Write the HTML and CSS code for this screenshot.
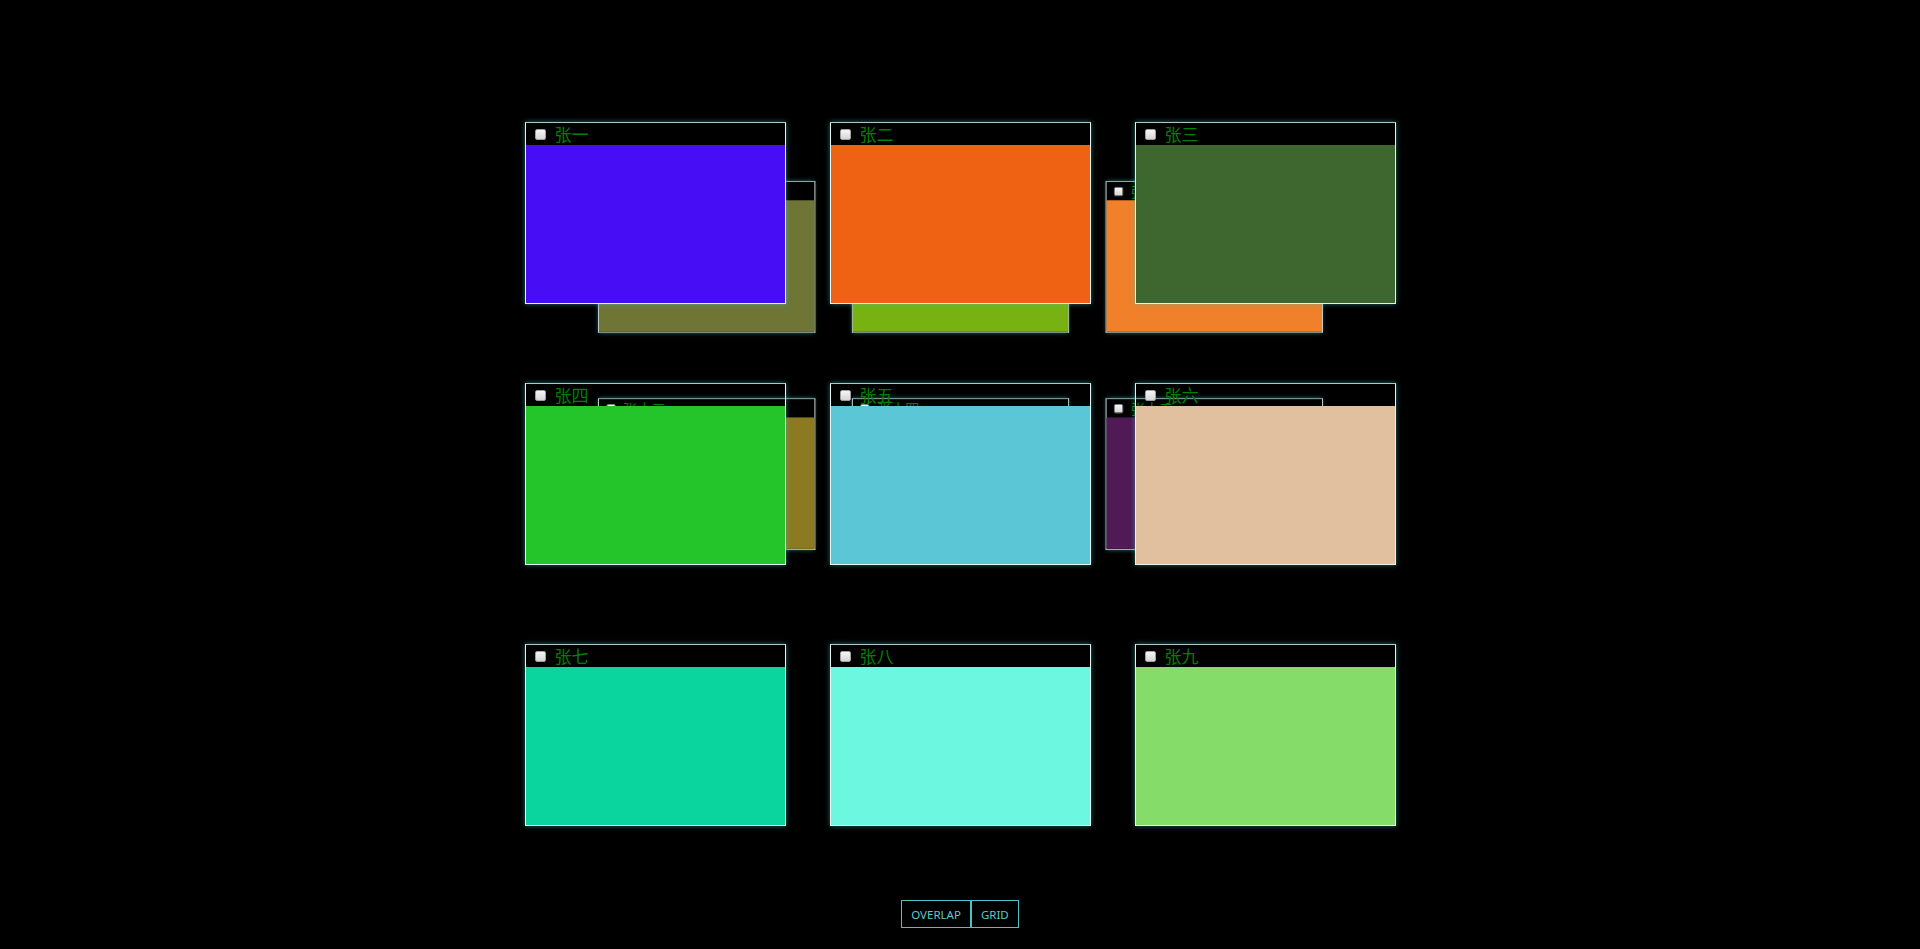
FILE: index.html
```html
<!DOCTYPE html>
<html lang="zh">
<head>
  <meta charset="UTF-8">
  <meta name="viewport" content="width=device-width, initial-scale=1">
  <title>Cards</title>
  <link rel="stylesheet" href="styles.css">
</head>
<body>
  <!-- Kartu-kartu bertumpuk -->
  <div class="stage">
    <div class="layer back">
      <div class="card"><div class="card-head"><input type="checkbox"><span>张十</span></div><div class="card-body c10"></div></div>
      <div class="card"><div class="card-head"><input type="checkbox"><span>张十一</span></div><div class="card-body c11"></div></div>
      <div class="card"><div class="card-head"><input type="checkbox"><span>张十二</span></div><div class="card-body c12"></div></div>
      <div class="card"><div class="card-head"><input type="checkbox"><span>张十三</span></div><div class="card-body c13"></div></div>
      <div class="card"><div class="card-head"><input type="checkbox"><span>张十四</span></div><div class="card-body c14"></div></div>
      <div class="card"><div class="card-head"><input type="checkbox"><span>张十五</span></div><div class="card-body c15"></div></div>
    </div>
    <div class="layer front">
      <div class="card"><div class="card-head"><input type="checkbox"><span>张一</span></div><div class="card-body c1"></div></div>
      <div class="card"><div class="card-head"><input type="checkbox"><span>张二</span></div><div class="card-body c2"></div></div>
      <div class="card"><div class="card-head"><input type="checkbox"><span>张三</span></div><div class="card-body c3"></div></div>
      <div class="card"><div class="card-head"><input type="checkbox"><span>张四</span></div><div class="card-body c4"></div></div>
      <div class="card"><div class="card-head"><input type="checkbox"><span>张五</span></div><div class="card-body c5"></div></div>
      <div class="card"><div class="card-head"><input type="checkbox"><span>张六</span></div><div class="card-body c6"></div></div>
      <div class="card"><div class="card-head"><input type="checkbox"><span>张七</span></div><div class="card-body c7"></div></div>
      <div class="card"><div class="card-head"><input type="checkbox"><span>张八</span></div><div class="card-body c8"></div></div>
      <div class="card"><div class="card-head"><input type="checkbox"><span>张九</span></div><div class="card-body c9"></div></div>
    </div>
  </div>

  <!-- Tombol mode -->
  <div class="modes">
    <button class="mode-btn">OVERLAP</button>
    <button class="mode-btn">GRID</button>
  </div>
</body>
</html>
```

FILE: styles.css
```css
/* Reset dasar */
* {
  margin: 0;
  padding: 0;
  box-sizing: border-box;
}
body {
  background: #000;
  font-family: "Noto Sans", "Noto Sans CJK SC", sans-serif;
  height: 100vh;
  overflow: hidden;
}

/* Panggung kartu */
.stage {
  display: grid;
  justify-content: center;
  padding-top: 122px;
}
.layer {
  grid-area: 1 / 1;
  position: relative;
  display: grid;
  grid-template-columns: repeat(3, 261px);
  grid-template-rows: repeat(3, 182px);
  column-gap: 44px;
  row-gap: 79px;
}
.layer.back {
  z-index: 1;
  transform: scale(0.832);
  transform-origin: center center;
}
.layer.front {
  z-index: 2;
}

/* Kartu (header transparan) */
.card {
  display: flex;
  flex-direction: column;
  border: 1px solid #e4f2f2;
  border-top-color: #a9c9c9;
  box-shadow: 0 0 5px rgba(70, 190, 190, 0.55);
}
.card-head {
  height: 22px;
  display: flex;
  align-items: center;
  gap: 9px;
  padding-left: 9px;
  color: #008000;
  font-family: "Noto Sans CJK SC", sans-serif;
  font-size: 17px;
  line-height: 22px;
  white-space: nowrap;
}
.card-head input {
  appearance: none;
  width: 11px;
  height: 11px;
  flex: none;
  border: 1px solid #a0a0a0;
  border-radius: 2px;
  background: linear-gradient(#f6f6f6, #d6d6d6);
  margin-top: 1px;
}
.card-head span {
  margin-top: -1px;
}
.card-body {
  flex: 1;
}

/* Warna kartu */
.c1 { background: #470ef6; }
.c2 { background: #ef6113; }
.c3 { background: #3d672e; }
.c4 { background: #24c52a; }
.c5 { background: #5bc6d5; }
.c6 { background: #e0c09f; }
.c7 { background: #0bd59e; }
.c8 { background: #6cf8e0; }
.c9 { background: #86dc68; }
.c10 { background: #6e7535; }
.c11 { background: #78b212; }
.c12 { background: #f1802a; }
.c13 { background: #8b7a22; }
.c14 { background: #3a8fd0; }
.c15 { background: #4f1a55; }

/* Tombol mode */
.modes {
  display: flex;
  justify-content: center;
  margin-top: 74px;
}
.mode-btn {
  height: 28px;
  padding: 0 9px;
  background: transparent;
  border: 1px solid #4cc2c2;
  color: #5cc9c9;
  font-family: "Noto Sans", sans-serif;
  font-size: 11.5px;
  cursor: pointer;
}
```
